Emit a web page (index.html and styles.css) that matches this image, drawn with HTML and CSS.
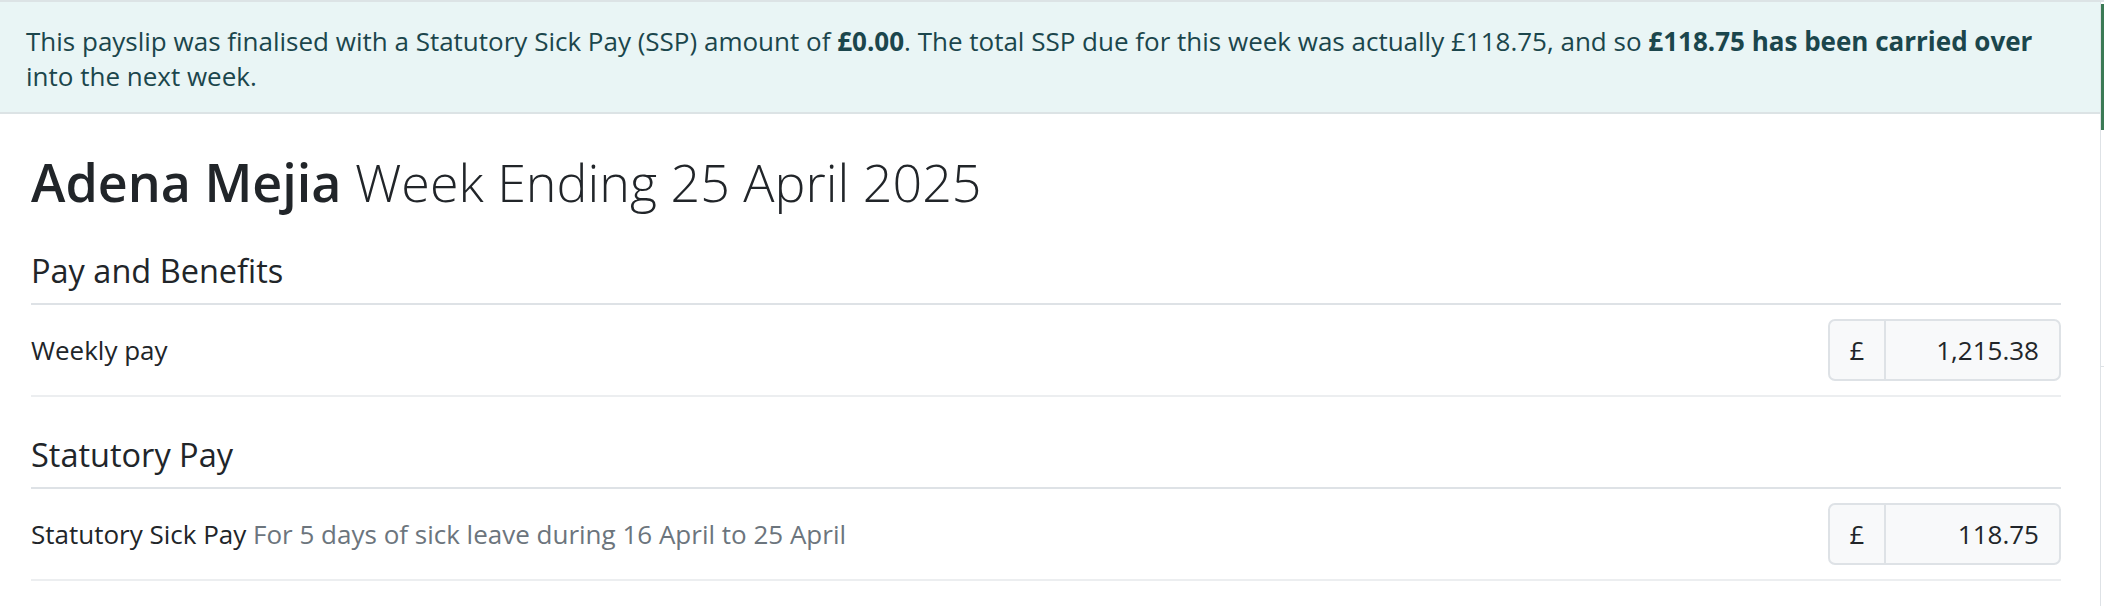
FILE: index.html
```html
<html>

<head>
    <title>Payslip - Adena Mejia</title>
    <link rel="stylesheet" href="styles.css">
</head>

<body>
    <div class="page">
        <main class="payslip">
            <div class="notice">
                This payslip was finalised with a Statutory Sick Pay (SSP) amount of <strong>£0.00</strong>. The total SSP due for this week was actually £118.75, and so <strong>£118.75 has been carried over</strong> into the next week.
            </div>

            <div class="content">
                <h1 class="title"><strong>Adena Mejia</strong> Week Ending 25 April 2025</h1>

                <section class="pay-section">
                    <h2>Pay and Benefits</h2>
                    <div class="pay-row">
                        <span class="pay-label">Weekly pay</span>
                        <div class="amount">
                            <span class="currency">£</span>
                            <span class="value">1,215.38</span>
                        </div>
                    </div>
                </section>

                <section class="pay-section">
                    <h2>Statutory Pay</h2>
                    <div class="pay-row">
                        <span class="pay-label">Statutory Sick Pay <span class="note">For 5 days of sick leave during 16 April to 25 April</span></span>
                        <div class="amount">
                            <span class="currency">£</span>
                            <span class="value">118.75</span>
                        </div>
                    </div>
                </section>
            </div>
        </main>

        <aside class="sidebar">
            <div class="sidebar-flag"></div>
            <div class="sidebar-row"></div>
        </aside>
    </div>
</body>

</html>
```

FILE: styles.css
```css
html,
body {
    margin: 0;
    background: #fff;
}

body {
    font-family: 'Open Sans', 'Liberation Sans', sans-serif;
    font-size: 26px;
    line-height: 1.5;
    color: #212529;
}

.page {
    display: flex;
    align-items: stretch;
    min-height: 606px;
}

.payslip {
    flex: 1;
}

/* SSP carry-over banner */

.notice {
    padding: 22px 24px 18px 26px;
    background-color: #e9f5f5;
    border-top: 2px solid #dce3e5;
    border-bottom: 2px solid #dce3e5;
    color: #1b464c;
    line-height: 35px;
}

.notice strong {
    font-weight: 700;
}

.content {
    padding: 0 39px 0 31px;
}

.title {
    margin: 37px 0 0;
    font-size: 52px;
    font-weight: 300;
    line-height: 1.2;
}

.title strong {
    font-weight: 600;
}

.pay-section {
    margin-top: 38px;
}

.pay-section h2 {
    margin: 0;
    padding-bottom: 13px;
    font-size: 32.5px;
    font-weight: 400;
    line-height: 1.2;
    border-bottom: 2px solid #dee2e6;
}

.pay-row {
    display: flex;
    align-items: center;
    justify-content: space-between;
    padding: 14px 0;
    border-bottom: 2px solid #eceef0;
}

.note {
    color: #6c757d;
}

/* read-only currency input */

.amount {
    display: flex;
    width: 233px;
    height: 62px;
    box-sizing: border-box;
    border: 2px solid #dee2e6;
    border-radius: 7px;
    background-color: #f8f9fa;
    overflow: hidden;
}

.currency {
    display: flex;
    align-items: center;
    justify-content: center;
    width: 54px;
    border-right: 2px solid #dee2e6;
}

.value {
    flex: 1;
    display: flex;
    align-items: center;
    justify-content: flex-end;
    padding-right: 20px;
}

/* edge of the side panel */

.sidebar {
    width: 3px;
    border-top: 2px solid #dee2e6;
    border-left: 1px solid #dee2e6;
}

.sidebar-flag {
    height: 126px;
    margin-top: 2px;
    background-color: #3b7a55;
}

.sidebar-row {
    height: 236px;
    border-bottom: 1px solid #dee2e6;
}
```
